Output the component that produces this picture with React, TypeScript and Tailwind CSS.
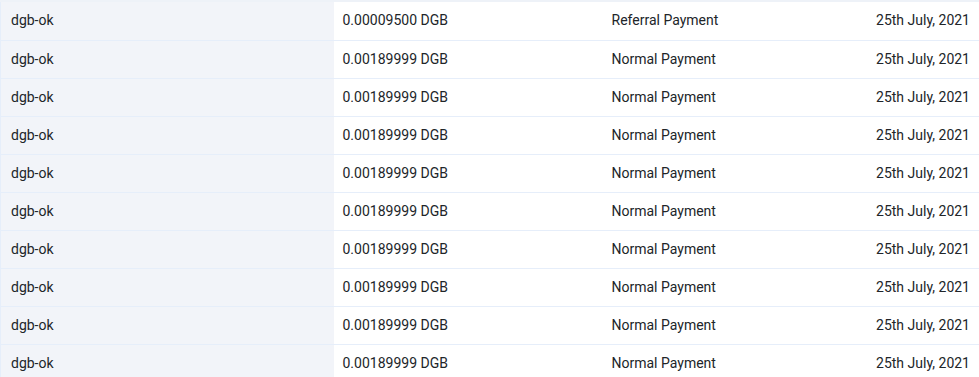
const ROWS = [
  { user: "dgb-ok", amount: "0.00009500 DGB", type: "Referral Payment", date: "25th July, 2021" },
  ...Array.from({ length: 9 }, () => ({
    user: "dgb-ok",
    amount: "0.00189999 DGB",
    type: "Normal Payment",
    date: "25th July, 2021",
  })),
];

export default function App() {
  return (
    <div className="w-[979px] h-[377px] overflow-hidden bg-white" style={{ fontFamily: "Roboto, sans-serif" }}>
      <div className="h-[2px] bg-[#eef2f8]" />
      <table className="w-full border-collapse table-fixed text-[14px] text-[#212529]">
        <colgroup>
          <col className="w-[333px]" />
          <col className="w-[269px]" />
          <col className="w-[200px]" />
          <col />
        </colgroup>
        <tbody>
          {ROWS.map((r, i) => (
            <tr key={i} className="h-[38px] border-b border-[#e6eefa]">
              <td className="bg-[#f2f4f9] border-l border-[#e6eefa] pl-[10px]">{r.user}</td>
              <td className="pl-[9px]">{r.amount}</td>
              <td className="pl-[9px]">{r.type}</td>
              <td className="pr-[9px] text-right">{r.date}</td>
            </tr>
          ))}
        </tbody>
      </table>
    </div>
  );
}
